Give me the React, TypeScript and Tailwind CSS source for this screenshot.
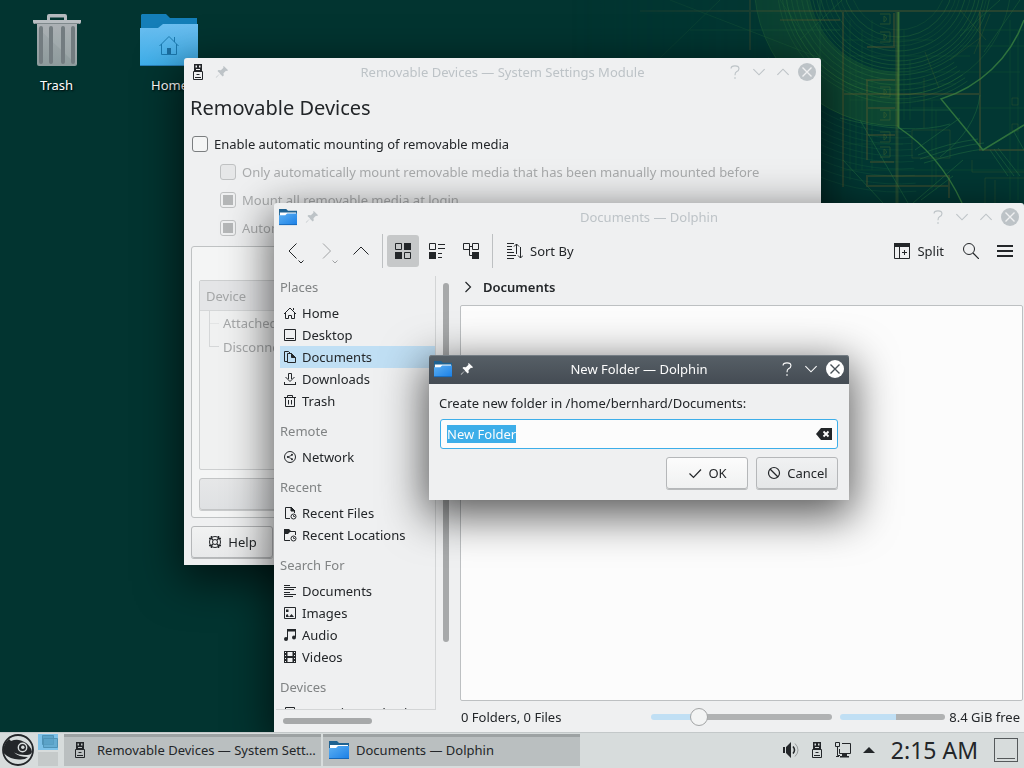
import React, { useEffect, useRef } from 'react';

type Tone = 'active' | 'inactive';

type IconProps = { className?: string; children: React.ReactNode; size?: number };

function Icon({ className = '', children, size = 16 }: IconProps) {
  return (
    <svg
      width={size}
      height={size}
      viewBox="0 0 16 16"
      fill="none"
      stroke="currentColor"
      aria-hidden="true"
      className={`shrink-0 ${className}`}
    >
      {children}
    </svg>
  );
}

const UsbIcon = ({ paper = '#d7dcdc' }: { paper?: string }) => (
  <Icon>
    <path d="M4 0h8v7H4z" fill="currentColor" stroke="none" />
    <path d="M5.500 1.500h1.500v2H5.500zM9 1.500h1.500v2H9zM6 5h4v1H6z" fill={paper} stroke="none" />
    <path d="M3.500 7.500h9v8h-9z" fill={paper} />
    <path d="M6.500 10.500h3M5 13.500h6" />
  </Icon>
);

const PinIcon = () => (
  <Icon size={14}>
    <path
      d="M10 1 15 6l-1.500.8-1-.3-2.800 3 .3 2.500-1.200 1.200-3.200-3.200L2 14l-1.200.8L1.500 13.500 5.800 9.800 2.800 6.800 4 5.600l2.700.4 3-2.900-.4-1.200z"
      fill="currentColor"
      stroke="none"
    />
  </Icon>
);

function SmallFolder({ size }: { size: number }) {
  return (
    <svg width={size} height={size} viewBox="0 0 20 20" aria-hidden="true" className="shrink-0">
      <defs>
        <linearGradient id="folderFront" x1="0" y1="0" x2="1" y2="1">
          <stop offset="0" stopColor="#5cb0f2" />
          <stop offset="1" stopColor="#1a7fe6" />
        </linearGradient>
      </defs>
      <path d="M0 1h8l2 2h10v8H0z" fill="#1f6291" />
      <path d="M1 5h18v4H1z" fill="#fff" />
      <path d="M0 8h7l2-2h11v13H0z" fill="url(#folderFront)" />
      <path d="M0 18h20v1H0z" fill="#1667b7" />
    </svg>
  );
}

function HomeFolder() {
  return (
    <svg width="59" height="56" viewBox="0 0 59 56" aria-hidden="true">
      <defs>
        <linearGradient id="homeFront" x1="0" y1="0" x2="0" y2="1">
          <stop offset="0" stopColor="#6bbef0" />
          <stop offset="1" stopColor="#3daee9" />
        </linearGradient>
      </defs>
      <path d="M2 2h24l4 4h27v22H1V3z" fill="#147eb8" />
      <path d="M0 16h18l5-4h35v41q0 1-1 1H1q-1 0-1-1z" fill="url(#homeFront)" />
      <path d="M0 53h58v1H0z" fill="#2980b9" />
      <g fill="none" stroke="#1b7ab0">
        <path d="m19.500 34 9.500-9.500L38.500 34M21.500 32v10.500h15V32M34.500 30v-5" />
        <path d="M27 36h4v6h-4z" fill="#1b6fa3" stroke="none" />
      </g>
    </svg>
  );
}

function TrashCan() {
  return (
    <svg width="49" height="56" viewBox="0 0 49 56" aria-hidden="true">
      <defs>
        <linearGradient id="can" x1="0" y1="0" x2="0" y2="1">
          <stop offset="0" stopColor="#a5abaf" />
          <stop offset="1" stopColor="#8e9b9c" />
        </linearGradient>
      </defs>
      <path d="M15 8V4q0-2 2-2h16q2 0 2 2v4h-3V5.500H18V8z" fill="#b4b9bd" />
      <path d="M5 11h40v41q0 2-2 2H7q-2 0-2-2z" fill="url(#can)" />
      <path d="M5 15 45 53V11H5z" fill="#fff" opacity=".08" />
      <path d="M9 16v34M19 16v34M31 16v34M41 16v34" stroke="#737c80" strokeWidth="4" strokeLinecap="round" />
      <path d="M1 8h48v2q0 2-2 2H3q-2 0-2-2z" fill="#b9bec2" />
      <path d="M3 11h44v1H3z" fill="#7f898c" />
    </svg>
  );
}

function ChameleonLogo() {
  return (
    <svg width="32" height="32" viewBox="0 0 32 32" aria-hidden="true" className="shrink-0">
      <circle cx="16" cy="16" r="15" fill="#d7dcdc" stroke="#232629" strokeWidth="1.800" />
      <path
        d="M2 12Q4 7 7 5l2 2q5-2 10-.500 6 2 8.500 6Q30 15 30 18q-1 3-5 3-8 .500-13-2.500 5 4.500 14 4.500-3 3-9 2.500Q8 25.500 1.500 19z"
        fill="#232629"
      />
      <circle cx="20.500" cy="13.500" r="4.200" fill="#232629" stroke="#d7dcdc" strokeWidth="1.400" />
      <circle cx="20.800" cy="13.300" r="1.700" fill="#d7dcdc" />
    </svg>
  );
}

const CX = 378;
const CY = -18;
const point = (r: number, deg: number) => {
  const a = (deg * Math.PI) / 180;
  return `${(CX + r * Math.cos(a)).toFixed(1)} ${(CY + r * Math.sin(a)).toFixed(1)}`;
};

function Wallpaper() {
  const rings = [48, 55, 60, 64, 69, 74, 79, 83, 87, 90, 93];
  const outer = [98, 103, 108, 113, 117, 121];
  const lower = [150, 156, 162, 168, 174, 180, 187, 194, 202, 210];
  return (
    <svg
      className="absolute right-0 top-0"
      width="504"
      height="240"
      viewBox="0 0 504 240"
      fill="none"
      aria-hidden="true"
    >
      <defs>
        <linearGradient id="fadeX" x1="0" x2="1">
          <stop offset="0.100" stopColor="#fff" stopOpacity="0" />
          <stop offset="0.650" stopColor="#fff" />
        </linearGradient>
        <mask id="fade">
          <path d="M0 0h504v240H0z" fill="url(#fadeX)" />
        </mask>
      </defs>
      <g mask="url(#fade)">
        <path d="M0 0h504v240H0z" fill="#02403a" opacity=".35" />
        <path
          d={`M${point(144, 90)}A144 144 0 0 1 ${point(144, 180)}L${point(90, 180)}A90 90 0 0 0 ${point(90, 90)}z`}
          fill="#2f7034"
          opacity=".28"
        />
        <g stroke="#39823c" opacity=".38">
          {rings.map((r) => (
            <circle key={r} cx={CX} cy={CY} r={r} opacity={r % 2 ? 0.8 : 0.45} />
          ))}
          <path d={`M${point(144, 90)}A144 144 0 0 1 ${point(144, 180)}`} />
          <circle cx={CX} cy={CY} r="113" opacity=".6" />
        </g>
        <g stroke="#3f8a3d" opacity=".25">
          {outer.map((r) => (
            <path key={r} d={`M${point(r, 55)}A${r} ${r} 0 0 1 ${point(r, 175)}`} />
          ))}
        </g>
        <g stroke="#1f6a44" opacity=".25">
          {lower.map((r) => (
            <path key={r} d={`M${point(r, 85)}A${r} ${r} 0 0 1 ${point(r, 150)}`} />
          ))}
        </g>
        <g stroke="#6a5e2c" strokeWidth="2" opacity=".34">
          <path d="M120 11h384M323 11v176M323 94h137M460 11v139h44M429 186v12M230 0v50M260 20h60" />
          <path d="M347 47h27V13M347 160v-80h28M347 108h28M347 135h28M350 162h24M367 176h62v10h-82v-10z" />
        </g>
        <g stroke="#57702c" opacity=".4">
          {[19, 37, 92, 115, 137, 152].map((y) => (
            <path key={y} d={`M360 ${y - 5}h10v10h-10M364 ${y - 3}q5 3 0 6z`} />
          ))}
          <path
            d="M392 130h38v28h-38zM430 60l30-22M405 52l14 36M470 14l-16 40M440 10l26 30M404 78v50M452 160v12h52M465 178h39M465 178v25M475 180v23M492 98h6v7h-6zM492 124h6v7h-6z"
            opacity=".6"
          />
        </g>
        <path d="M377 12v191" stroke="#5a6b30" strokeWidth="3" opacity=".35" />
        <path d="M378.500 12v115" stroke="#59903a" strokeWidth="2" opacity=".6" />
        <path
          d={`M504 20A128 128 0 0 1 421 99L463 150L504 125M378 127Q420 155 442 203`}
          stroke="#3d8640"
          strokeWidth="1.500"
          opacity=".75"
        />
        <path
          d="M395 150 440 118M400 159q40-14 64-16M404 163q40-12 60-14M398 155q30-12 60-16M470 150l18 26M474 149l20 27M478 148l22 28M494 132l10 18M340 120l48 83M323 160l40 43M443 160l-50 43M433 176l-32 24M320 118q70 18 110 6M360 110h70M460 95q-4 34-40 62"
          stroke="#2d7a43"
          opacity=".4"
        />
        <g stroke="#2a6e3c" opacity=".4">
          <path d="M150 0 300 58M200 0l-60 58M260 0l40 58M170 30h150M300 0v58M280 40l42-40M480 0l-40 36M500 0l-36 52" />
          <path
            d="M330 20v160M336 60v110M342 30v140M352 20v150M384 30v90M390 60v60M490 20v180M498 30v170M412 100v90M416 110v80"
            opacity=".55"
          />
          <path
            d="M323 40h90M330 56h120M330 72h170M326 84h110M330 100h90M320 170h184M323 144h60M392 108h112M440 30h64M440 46h64"
            opacity=".55"
          />
        </g>
      </g>
    </svg>
  );
}

function WindowControls({ tone, maximize }: { tone: Tone; maximize: boolean }) {
  const active = tone === 'active';
  return (
    <div className="flex items-center justify-end gap-1.5">
      <button type="button" aria-label="Help" className="size-[18px]">
        <Icon size={18}>
          <path d="M4.500 4.800Q4.500 2.500 8 2.500t3.500 2.600q0 1.800-2.200 2.700Q8 8.500 8 10.800" />
          <path d="M7.400 12.600h1.200v1.400H7.400z" fill="currentColor" stroke="none" />
        </Icon>
      </button>
      <button type="button" aria-label="Minimize" className="size-[18px]">
        <Icon size={18}>
          <path d="m3 5.500 5 5 5-5" />
        </Icon>
      </button>
      {maximize && (
        <button type="button" aria-label="Maximize" className="size-[18px]">
          <Icon size={18}>
            <path d="m3 10.500 5-5 5 5" />
          </Icon>
        </button>
      )}
      <button
        type="button"
        aria-label="Close"
        className={`flex size-[18px] items-center justify-center rounded-full ${
          active ? 'bg-white text-[#475057]' : 'bg-[#bdc3c7] text-[#eff0f1]'
        }`}
      >
        <Icon size={18}>
          <path d="m4 4 8 8M12 4l-8 8" strokeWidth="1.200" />
        </Icon>
      </button>
    </div>
  );
}

type TitleBarProps = { title: string; icon: React.ReactNode; tone: Tone; maximize?: boolean };

function TitleBar({ title, icon, tone, maximize = true }: TitleBarProps) {
  const look =
    tone === 'active'
      ? 'border-b border-[#454c54] h-[29px] bg-linear-to-b from-[#576067] to-[#454c54] text-[#fcfcfc] shadow-[inset_0_1px_0_#747d84]'
      : 'h-7 text-[#bdc3c7]';
  return (
    <header
      className={`grid shrink-0 grid-cols-[1fr_auto_1fr] items-center rounded-t-[3px] px-[5px] ${look}`}
    >
      <div className="flex items-center gap-1.5">
        <span className="flex size-[18px] items-center justify-center text-[#232629]">{icon}</span>
        <button type="button" aria-label="Keep above" className="flex size-[18px] items-center justify-center">
          <PinIcon />
        </button>
      </div>
      <h2>{title}</h2>
      <WindowControls tone={tone} maximize={maximize} />
    </header>
  );
}

const mountOptions = [
  { id: 'manual', label: 'Only automatically mount removable media that has been manually mounted before', on: false },
  { id: 'login', label: 'Mount all removable media at login', on: true },
  { id: 'attach', label: 'Automatically mount removable media when attached', on: true },
];

function SettingsWindow() {
  return (
    <section className="absolute left-[184px] top-[58px] flex h-[507px] w-[637px] flex-col rounded-t-[3px] bg-[#eff0f1] shadow-[0_12px_44px_4px_rgba(0,0,0,0.6)]">
      <TitleBar
        title="Removable Devices — System Settings Module"
        icon={<UsbIcon paper="#eff0f1" />}
        tone="inactive"
      />
      <div className="flex min-h-0 flex-1 flex-col px-[7px] pb-[7px] pt-[7px]">
        <h1 className="-ml-px text-[20px] leading-[30px]">Removable Devices</h1>
        <div className="flex flex-col pt-[7px]">
          <label className="flex h-7 items-center gap-1.5 pl-px">
            <input
              type="checkbox"
              className="size-4 appearance-none rounded-[3px] border border-[#7b7e80] bg-[#f4f5f5]"
            />
            Enable automatic mounting of removable media
          </label>
          {mountOptions.map((o) => (
            <label key={o.id} className="flex h-7 items-center gap-1.5 pl-[29px] text-[#a9abac]">
              <input
                type="checkbox"
                disabled
                defaultChecked={o.on}
                className="size-4 appearance-none rounded-[3px] border border-[#bfc1c2] bg-[#e6e7e8] p-0.5 checked:bg-[#b5b7b8] checked:bg-clip-content"
              />
              {o.label}
            </label>
          ))}
        </div>
        <div className="mt-1 flex min-h-0 flex-1 flex-col gap-2 rounded-[3px] border border-[#bfc2c3] bg-[#f4f5f5] px-[7px] pb-[7px] pt-[33px] text-[#a5a7a8]">
          <div className="flex-1 rounded-[2px] border border-[#cdcfd0] bg-[#f0f1f1]">
            <div className="flex h-[30px] items-center border-b border-[#d5d7d8] bg-[#e4e5e7] px-1.5">Device</div>
            <ul className="pl-[9px]">
              <li className="flex h-6 items-center gap-1 before:h-full before:w-2.5 before:border-l before:border-[#d5d7d8] before:bg-linear-to-b before:from-transparent before:from-50% before:via-[#d5d7d8] before:via-50% before:to-transparent before:to-54%">
                Attached Devices
              </li>
              <li className="flex h-6 items-center gap-1 before:mb-3 before:h-3 before:w-2.5 before:border-b before:border-l before:border-[#d5d7d8]">
                Disconnected Devices
              </li>
            </ul>
          </div>
          <button
            type="button"
            disabled
            className="h-8 rounded-[3px] border border-[#c3c5c6] bg-linear-to-b from-[#e6e7e8] to-[#dfe1e3] shadow-[0_1px_0_#c9cbcc]"
          >
            Forget Device
          </button>
        </div>
        <button
          type="button"
          className="mt-2 flex h-8 w-[82px] shrink-0 items-center justify-center gap-[5px] rounded-[3px] border border-[#b5b7b9] bg-linear-to-b from-[#f1f2f2] to-[#e8e9ea] shadow-[0_1px_0_#b9bbbc]"
        >
          <Icon>
            <circle cx="8" cy="8" r="5.500" />
            <circle cx="8" cy="8" r="2.500" />
            <path
              d="M4.500 2v2.500H2M11.500 2v2.500H14M4.500 14v-2.500H2M11.500 14v-2.500H14M3.500 3.500 6 6M12.500 3.500 10 6M3.500 12.500 6 10M12.500 12.500 10 10"
              strokeWidth="1.500"
            />
          </Icon>
          Help
        </button>
      </div>
    </section>
  );
}

type Place = { name: string; icon: React.ReactNode; current?: boolean };
type PlaceGroup = { title: string; items: Place[] };

const clockBadge = (
  <>
    <circle cx="11.500" cy="11.500" r="2.500" />
    <path d="M11.500 10v1.500H13" strokeWidth="0.800" />
  </>
);

const groups: PlaceGroup[] = [
  {
    title: 'Places',
    items: [
      {
        name: 'Home',
        icon: <path d="m2 9 6-6 6 6M3.500 8v5.500h3v-3h3v3h3V8M11.500 5V3" />,
      },
      { name: 'Desktop', icon: <path d="M2.500 2.500h11v11h-11zM4 11.500h8" /> },
      {
        name: 'Documents',
        current: true,
        icon: (
          <>
            <path d="M5 12.500H2.500v-10h4L9 5" />
            <path d="M5.500 4.500h4l4 4v5h-8z" />
            <path d="M9.500 4.500 13.500 8.500h-4z" fill="currentColor" />
          </>
        ),
      },
      {
        name: 'Downloads',
        icon: <path d="M2 13.500h12M2.500 11v2.500M13.500 11v2.500M3.500 6 8 10.500 12.500 6M6.500 8V2.500h3V8" />,
      },
      { name: 'Trash', icon: <path d="M2 4.500h12M3.500 4.500v9h9v-9M5.500 4V2.500h5V4M6.500 7v4.500M9.500 7v4.500" /> },
    ],
  },
  {
    title: 'Remote',
    items: [
      {
        name: 'Network',
        icon: (
          <>
            <circle cx="8" cy="8" r="5.500" />
            <path d="m10 6-4 2 4 2" strokeWidth="0.800" />
            <g fill="currentColor" stroke="none">
              <circle cx="10" cy="5.800" r="1" />
              <circle cx="5.800" cy="8" r="1" />
              <circle cx="10" cy="10.200" r="1" />
            </g>
          </>
        ),
      },
    ],
  },
  {
    title: 'Recent',
    items: [
      {
        name: 'Recent Files',
        icon: (
          <>
            <path d="M8 13.500H3.500v-11h6l3 3V8" />
            <path d="M9 2v4h4z" fill="currentColor" />
            {clockBadge}
          </>
        ),
      },
      {
        name: 'Recent Locations',
        icon: (
          <>
            <path d="M8 13.500H2.500V6M7 4.500h6.500V8" />
            <path d="M2 2h5l2 2-3 3H2z" fill="currentColor" stroke="none" />
            {clockBadge}
          </>
        ),
      },
    ],
  },
  {
    title: 'Search For',
    items: [
      { name: 'Documents', icon: <path d="M2 2.500h6M2 4.500h12M2 6.500h10M2 9.500h6M2 11.500h12M2 13.500h9" /> },
      {
        name: 'Images',
        icon: (
          <>
            <path d="M2.500 2.500h11v11h-11z" />
            <path d="M4 12V10l1.500-1 1.500 3zM7 12l2.500-3L12 12zM4 4.500h2.500V7H4z" fill="currentColor" stroke="none" />
          </>
        ),
      },
      {
        name: 'Audio',
        icon: (
          <>
            <path d="M5.500 12V3h8v7" />
            <path d="M5 2h9v2.500H5z" fill="currentColor" stroke="none" />
            <circle cx="4" cy="12" r="2" fill="currentColor" stroke="none" />
            <circle cx="12" cy="10.500" r="2" fill="currentColor" stroke="none" />
          </>
        ),
      },
      {
        name: 'Videos',
        icon: (
          <>
            <path d="M2 2h12v12H2z" fill="currentColor" stroke="none" />
            <path d="M5.500 3h5v4h-5zM5.500 9h5v4h-5z" fill="#eff0f1" stroke="none" />
            <path d="M3.500 3v10M12.500 3v10" stroke="#eff0f1" strokeDasharray="1 2" />
          </>
        ),
      },
    ],
  },
  {
    title: 'Devices',
    items: [{ name: '50.0 GiB Hard Drive', icon: <path d="M3.500 2.500h9v11h-9zM5 11.500h6" /> }],
  },
];

function ToolButton({
  label,
  children,
  menu = false,
  pressed = false,
  dim = false,
}: {
  label: string;
  children: React.ReactNode;
  menu?: boolean;
  pressed?: boolean;
  dim?: boolean;
}) {
  return (
    <button
      type="button"
      aria-label={label}
      disabled={dim}
      className={`relative flex size-8 shrink-0 items-center justify-center rounded-[3px] ${
        pressed ? 'bg-[#c6c8c9]' : ''
      } ${dim ? 'text-[#a0a2a4]' : ''}`}
    >
      <Icon>{children}</Icon>
      {menu && (
        <svg width="6" height="4" viewBox="0 0 6 4" className="absolute bottom-[3px] right-[5px]" aria-hidden="true">
          <path d="m.5.5 2.500 2.500L5.500.5" fill="none" stroke="currentColor" />
        </svg>
      )}
    </button>
  );
}

const Separator = () => <span className="ml-[3px] mr-0.5 h-[34px] w-px shrink-0 bg-[#bdc0c2]" />;

function Toolbar() {
  return (
    <div className="flex h-[37px] shrink-0 items-center gap-0.5 px-[3px] pt-[3px]">
      <ToolButton label="Back" menu>
        <path d="M11.500.5 4 8l7.500 7.500" />
      </ToolButton>
      <ToolButton label="Forward" menu dim>
        <path d="M4 .5 11.500 8 4 15.500" />
      </ToolButton>
      <ToolButton label="Up">
        <path d="M.5 11.500 8 4l7.500 7.500" />
      </ToolButton>
      <Separator />
      <ToolButton label="Icons" pressed>
        <path d="M.5.5h6v6h-6zM9.500 9.500h6v6h-6z" />
        <path d="M9 0h7v7H9zM0 9h7v7H0z" fill="currentColor" stroke="none" />
      </ToolButton>
      <ToolButton label="Compact">
        <path d="M.5.5h6v6h-6zM9 1.500h7M9 5.500h7M9 10.500h4M9 14.500h4" />
        <path d="M0 9h7v7H0z" fill="currentColor" stroke="none" />
      </ToolButton>
      <ToolButton label="Details">
        <path d="M.5.5h6v6h-6zM9.500.5h6v6h-6zM6.500 3.500h3M6.500 3.500v9H9" />
        <path d="M9 9h7v7H9z" fill="currentColor" stroke="none" />
      </ToolButton>
      <Separator />
      <button type="button" className="ml-2.5 flex h-8 items-center gap-[7px]">
        <Icon>
          <path d="M0 .5h7M0 3.500h5M0 6.500h5M0 9.500h7M0 12.500h9M0 15.500h7M9.500 1v10M7 3.500l2.500-2.500L12 3.500M13.500 4v11M11 12.500l2.500 2.500L16 12.500" />
        </Icon>
        Sort By
      </button>
      <button type="button" className="ml-auto mr-[9px] flex h-8 items-center gap-[7px]">
        <Icon>
          <path d="M.5 1.500h15v14H.5zM5.500 2v13M8 9.500h5M10.500 7v5" />
          <path d="M0 0h16v4H0z" fill="currentColor" stroke="none" />
        </Icon>
        Split
      </button>
      <ToolButton label="Search">
        <circle cx="6" cy="6" r="5.500" />
        <path d="m10 10 6 6" strokeWidth="1.200" />
      </ToolButton>
      <ToolButton label="Menu">
        <path d="M0 3h16M0 8h16M0 13h16" strokeWidth="2" />
      </ToolButton>
    </div>
  );
}

function Sidebar() {
  return (
    <div className="flex shrink-0 pl-0.5 pt-2">
      <div className="flex flex-col">
        <nav className="h-0 w-40 flex-1 overflow-hidden border-b border-r border-[#d3d5d6] pl-1">
          {groups.map((g, gi) => (
            <div key={g.title}>
              <h3 className={`pb-1 leading-[22px] text-[#808384] ${gi === 0 ? '' : 'pt-2'}`}>{g.title}</h3>
              <ul>
                {g.items.map((p) => (
                  <li key={p.name}>
                    <a
                      href="#"
                      className={`flex h-[22px] items-center gap-1 whitespace-nowrap pl-0.5 ${
                        p.current ? 'bg-[#c0dff4]' : ''
                      }`}
                    >
                      <Icon>{p.icon}</Icon>
                      {p.name}
                    </a>
                  </li>
                ))}
              </ul>
            </div>
          ))}
        </nav>
        <div className="flex h-[22px] items-center pl-[7px]">
          <div className="h-1.5 w-[89px] rounded-full bg-[#a7a9aa]" />
        </div>
      </div>
      <div className="px-[7px] pt-[7px]">
        <div className="h-[359px] w-1.5 rounded-full bg-[#a7a9aa]" />
      </div>
    </div>
  );
}

function DolphinWindow() {
  return (
    <section className="absolute bottom-9 left-[274px] right-0 top-[203px] flex flex-col rounded-t-[3px] bg-[#eff0f1] shadow-[0_12px_44px_4px_rgba(0,0,0,0.6)]">
      <TitleBar title="Documents — Dolphin" icon={<SmallFolder size={18} />} tone="inactive" />
      <Toolbar />
      <div className="flex min-h-0 flex-1">
        <Sidebar />
        <main className="flex min-w-0 flex-1 flex-col pl-1 pr-px pt-2">
          <div className="flex h-[22px] items-center gap-[7px]">
            <Icon>
              <path d="m5.500 3 5 5-5 5" strokeWidth="1.200" />
            </Icon>
            <span className="font-semibold">Documents</span>
          </div>
          <div className="mt-[7px] flex-1 rounded-[2px] border border-[#bdc0c2] bg-[#fcfcfc]" />
          <footer className="flex h-[31px] items-center pl-px pr-[3px]">
            <span>0 Folders, 0 Files</span>
            <input
              type="range"
              aria-label="Icon size"
              defaultValue={24}
              className="ml-auto h-1.5 w-[181px] appearance-none rounded-full bg-[linear-gradient(to_right,#c0dff4_27%,#b0b2b3_27%)] [&::-webkit-slider-thumb]:size-[18px] [&::-webkit-slider-thumb]:appearance-none [&::-webkit-slider-thumb]:rounded-full [&::-webkit-slider-thumb]:border [&::-webkit-slider-thumb]:border-[#a3a5a6] [&::-webkit-slider-thumb]:bg-[#f3f4f4]"
            />
            <div className="ml-2 mr-1 h-1.5 w-[105px] rounded-full bg-[linear-gradient(to_right,#c0dff4_53%,#b0b2b3_53%)]" />
            <span>8.4 GiB free</span>
          </footer>
        </main>
      </div>
    </section>
  );
}

function NewFolderDialog() {
  const field = useRef<HTMLInputElement>(null);
  useEffect(() => {
    field.current?.focus();
    field.current?.select();
  }, []);
  const button =
    'flex h-8 w-[82px] items-center justify-center gap-[5px] rounded-[3px] border border-[#b5b7b9] bg-linear-to-b shadow-[0_1px_0_#b9bbbc]';
  return (
    <section
      role="dialog"
      aria-label="New Folder"
      className="absolute left-[429px] top-[355px] w-[420px] rounded-t-[3px] bg-[#eff0f1] shadow-[0_12px_44px_4px_rgba(0,0,0,0.65)]"
    >
      <TitleBar title="New Folder — Dolphin" icon={<SmallFolder size={18} />} tone="active" maximize={false} />
      <form className="flex flex-col px-[11px] pb-[11px] pt-2" onSubmit={(e) => e.preventDefault()}>
        <label htmlFor="folder-name" className="-ml-px leading-[22px]">
          Create new folder in /home/bernhard/Documents:
        </label>
        <div className="mt-[5px] flex h-[30px] items-center rounded-[3px] border border-[#3daee9] bg-[#fcfcfc] pl-1.5 pr-[5px]">
          <input
            ref={field}
            id="folder-name"
            defaultValue="New Folder"
            className="min-w-0 flex-1 leading-[18px] outline-none selection:bg-[#3daee9] selection:text-[#fcfcfc]"
          />
          <button type="button" aria-label="Clear">
            <Icon>
              <path d="M5 2h11v12H5L0 8z" fill="currentColor" stroke="none" />
              <path d="m7.500 5.500 5 5M12.500 5.500l-5 5" stroke="#fcfcfc" strokeWidth="1.800" />
            </Icon>
          </button>
        </div>
        <div className="mt-2 flex justify-end gap-2">
          <button type="submit" className={`${button} from-[#fcfcfc] to-[#f0f1f1]`}>
            <Icon>
              <path d="m2.500 8.500 4 4L14 4.500" strokeWidth="1.200" />
            </Icon>
            OK
          </button>
          <button type="button" className={`${button} from-[#f0f1f2] to-[#e5e7e8]`}>
            <Icon>
              <circle cx="8" cy="8" r="5.500" strokeWidth="1.200" />
              <path d="m4 4 8 8" strokeWidth="1.200" />
            </Icon>
            Cancel
          </button>
        </div>
      </form>
    </section>
  );
}

function Task({ title, icon }: { title: string; icon: React.ReactNode }) {
  return (
    <button
      type="button"
      className="flex w-[257px] items-center gap-[7px] bg-[#babfc0] pl-1.5 pr-1 text-left shadow-[inset_0_3px_0_#9da2a3]"
    >
      <span className="flex w-5 shrink-0 justify-center">{icon}</span>
      <span className="truncate">{title}</span>
    </button>
  );
}

function Panel() {
  return (
    <footer className="absolute inset-x-0 bottom-0 flex h-9 items-stretch border-t border-[#c3c8c9] bg-[#d7dcdc] pb-0.5 pt-px">
      <button type="button" aria-label="Application launcher" className="ml-0.5 flex w-8 items-center">
        <ChameleonLogo />
      </button>
      <div className="ml-1 flex w-5 flex-col gap-0.5">
        <button type="button" aria-label="Desktop 1" className="flex flex-1 bg-[#7cc1e8] pl-1 pt-px">
          <svg width="16" height="13" viewBox="0 0 16 13" aria-hidden="true">
            <path d="M.5.500h11v9H.5z" fill="#5ba3c8" stroke="#4f93b6" />
            <path d="M1.500 3.500h14v9h-14z" fill="#5ba3c8" fillOpacity=".7" stroke="#4f93b6" />
          </svg>
        </button>
        <button type="button" aria-label="Desktop 2" className="flex-1 bg-[#c5caca]" />
      </div>
      <div className="ml-1.5 flex gap-0.5">
        <Task title="Removable Devices — System Sett…" icon={<UsbIcon paper="#babfc0" />} />
        <Task title="Documents — Dolphin" icon={<SmallFolder size={20} />} />
      </div>
      <div className="ml-auto flex items-center gap-2.5 pr-1.5">
        <button type="button" aria-label="Volume">
          <Icon>
            <path d="M0 5h2v6H0zM3 5l5-5v16l-5-5z" fill="currentColor" stroke="none" />
            <path d="M10 4.500q3 3.500 0 7" strokeWidth="1.500" />
            <path d="M12 1.500q6 6.500 0 13" opacity=".35" />
          </Icon>
        </button>
        <button type="button" aria-label="Removable devices">
          <UsbIcon />
        </button>
        <button type="button" aria-label="Network">
          <Icon>
            <path d="M7 1.500h8.500v10h-11V7M.5.500h4v4h-4zM2.500 5v8.500H5M1 14.500h3" />
            <path d="M7 12h5v2h2v1.500H5V14h2z" fill="currentColor" stroke="none" />
          </Icon>
        </button>
        <button type="button" aria-label="Show hidden icons">
          <Icon>
            <path d="M2 11 8 5l6 6z" fill="currentColor" stroke="none" />
          </Icon>
        </button>
        <time className="ml-1 text-[23px] leading-8">2:15 AM</time>
        <button
          type="button"
          aria-label="Show desktop"
          className="ml-1.5 flex size-6 items-end border border-[#55595b] px-0.5 pb-0.5"
        >
          <span className="h-px w-full bg-[#55595b]" />
        </button>
      </div>
    </footer>
  );
}

function DesktopIcon({ name, icon }: { name: string; icon: React.ReactNode }) {
  return (
    <a
      href="#"
      className="flex w-[113px] flex-col items-center gap-2 text-white [text-shadow:1px_1px_2px_#000]"
    >
      {icon}
      {name}
    </a>
  );
}

export default function App() {
  return (
    <div className="relative h-screen w-full overflow-hidden bg-[#023430] font-['Noto_Sans',sans-serif] text-[13px] leading-[18px] text-[#232629]">
      <Wallpaper />
      <div className="flex pt-3">
        <DesktopIcon name="Trash" icon={<TrashCan />} />
        <DesktopIcon name="Home" icon={<HomeFolder />} />
      </div>
      <SettingsWindow />
      <DolphinWindow />
      <NewFolderDialog />
      <Panel />
    </div>
  );
}
